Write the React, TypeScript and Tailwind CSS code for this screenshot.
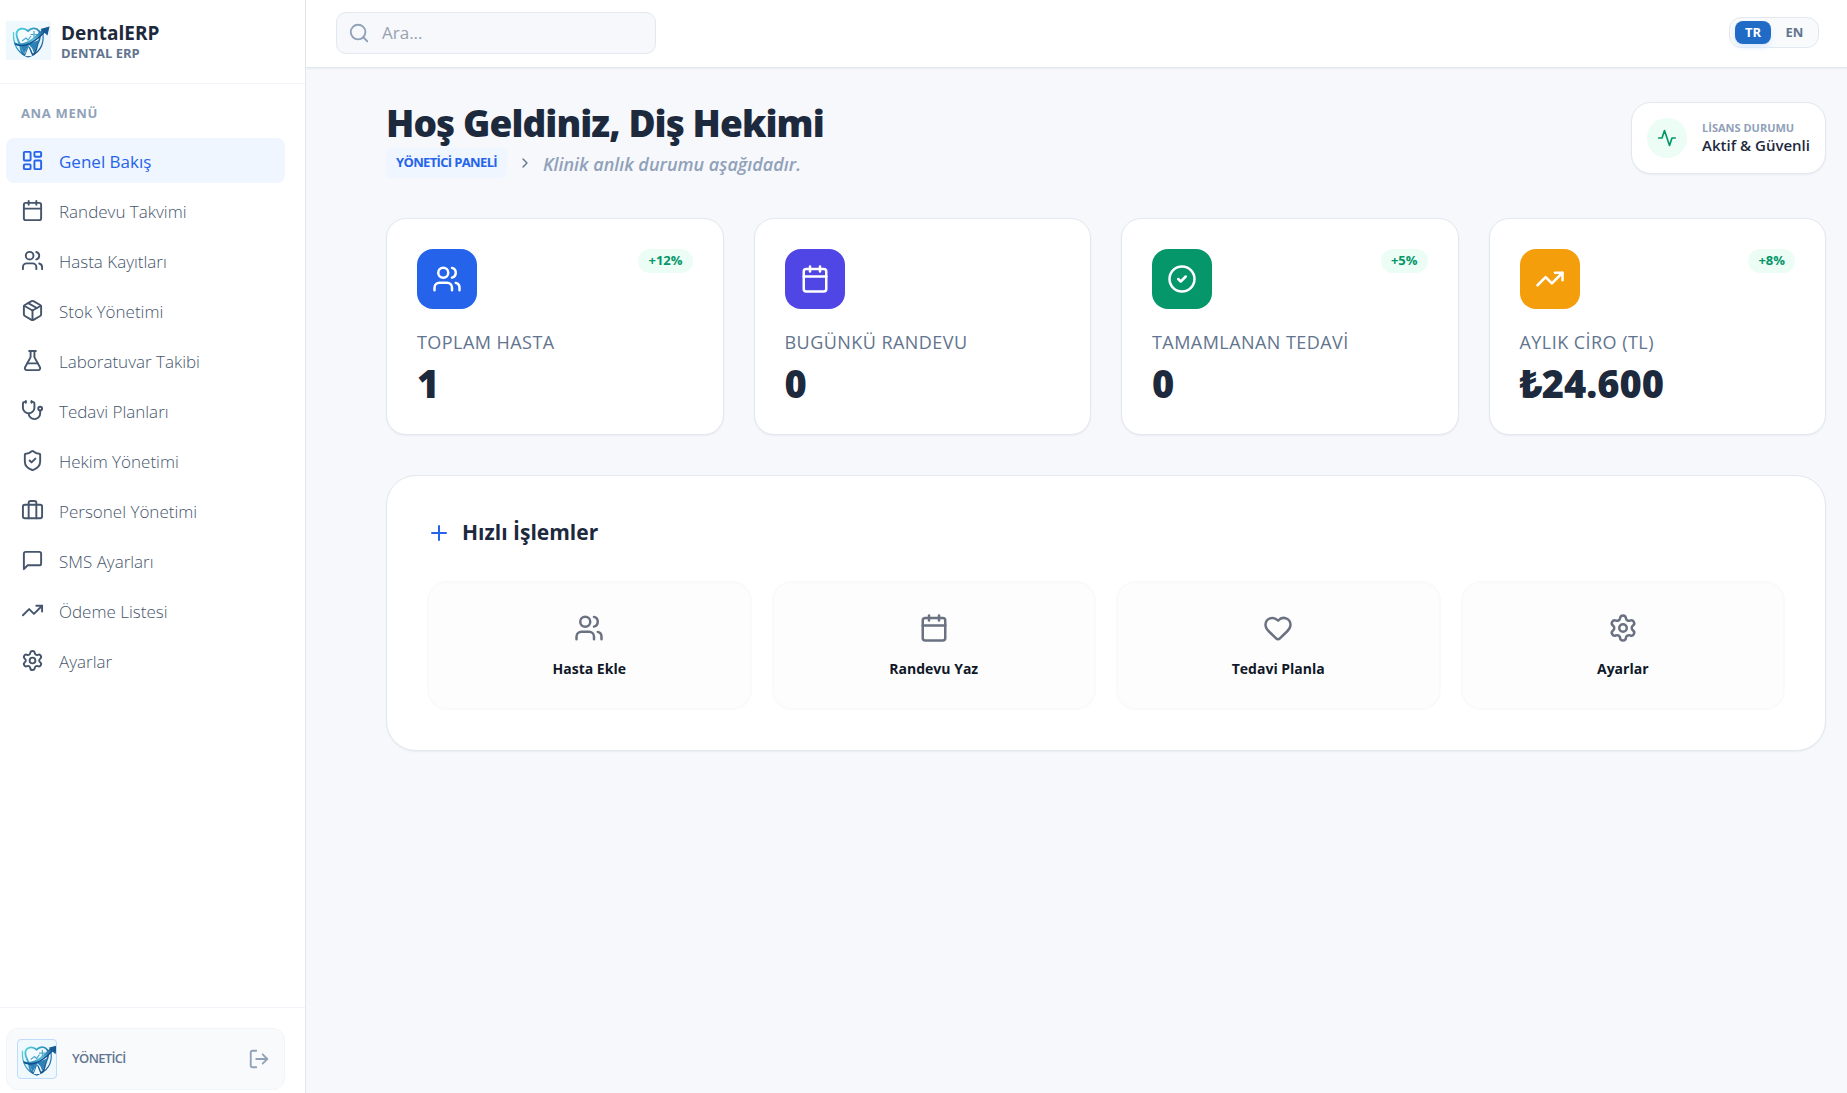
import { useState } from 'react'
import {
  Briefcase,
  Calendar,
  ChevronRight,
  CircleCheck,
  FlaskConical,
  Heart,
  LayoutDashboard,
  LogOut,
  Package,
  Plus,
  Search,
  Settings,
  ShieldCheck,
  Stethoscope,
  TrendingUp,
  Users,
} from 'lucide-react'

function MessageIcon({ className }: { className?: string }) {
  return (
    <svg viewBox="0 0 24 24" fill="none" stroke="currentColor" strokeWidth="2" strokeLinecap="round" strokeLinejoin="round" className={className}>
      <path d="M21 15a2 2 0 0 1-2 2H7l-4 4V5a2 2 0 0 1 2-2h14a2 2 0 0 1 2 2z" />
    </svg>
  )
}

function PulseIcon({ className }: { className?: string }) {
  return (
    <svg viewBox="0 0 24 24" fill="none" stroke="currentColor" strokeWidth="2" strokeLinecap="round" strokeLinejoin="round" className={className}>
      <path d="M22 12h-4l-3 9L9 3l-3 9H2" />
    </svg>
  )
}

const menu = [
  { label: 'Genel Bakış', icon: LayoutDashboard },
  { label: 'Randevu Takvimi', icon: Calendar },
  { label: 'Hasta Kayıtları', icon: Users },
  { label: 'Stok Yönetimi', icon: Package },
  { label: 'Laboratuvar Takibi', icon: FlaskConical },
  { label: 'Tedavi Planları', icon: Stethoscope },
  { label: 'Hekim Yönetimi', icon: ShieldCheck },
  { label: 'Personel Yönetimi', icon: Briefcase },
  { label: 'SMS Ayarları', icon: MessageIcon },
  { label: 'Ödeme Listesi', icon: TrendingUp },
  { label: 'Ayarlar', icon: Settings },
]

const stats = [
  { label: 'TOPLAM HASTA', value: '1', change: '+12%', icon: Users, color: 'bg-[#2563eb]' },
  { label: 'BUGÜNKÜ RANDEVU', value: '0', change: '', icon: Calendar, color: 'bg-[#4f46e5]' },
  { label: 'TAMAMLANAN TEDAVİ', value: '0', change: '+5%', icon: CircleCheck, color: 'bg-[#059669]' },
  { label: 'AYLIK CİRO (TL)', value: '₺24.600', change: '+8%', icon: TrendingUp, color: 'bg-[#f59e0b]' },
]

const actions = [
  { label: 'Hasta Ekle', icon: Users },
  { label: 'Randevu Yaz', icon: Calendar },
  { label: 'Tedavi Planla', icon: Heart },
  { label: 'Ayarlar', icon: Settings },
]

function Logo({ className }: { className?: string }) {
  return (
    <svg viewBox="0 0 45 39" preserveAspectRatio="xMidYMid slice" className={className} role="img" aria-label="DentalERP">
      <defs>
        <linearGradient id="tooth" x1="0" y1="0" x2="1" y2="1">
          <stop offset="0" stopColor="#4fd8e0" />
          <stop offset="0.5" stopColor="#2a86b8" />
          <stop offset="1" stopColor="#0f3d7a" />
        </linearGradient>
        <linearGradient id="swoosh" x1="0" y1="1" x2="1" y2="0">
          <stop offset="0" stopColor="#1a6fae" />
          <stop offset="0.5" stopColor="#5cc0dc" />
          <stop offset="1" stopColor="#0f4f8c" />
        </linearGradient>
      </defs>
      {/* shield */}
      <path d="M7.500 11C7 20 9 31 22 36C34 32 38 23 37 13" fill="#e3f4fb" stroke="url(#tooth)" strokeWidth="1.2" />
      {/* tooth */}
      <path
        d="M22 10C18 6 11 7 10.500 13C10.500 18 13 20 14 24C15 29 16 34 19 33.500C21 33 20.500 27 22.500 26C25 27 24.500 33 27 33.500C30 33 30 27 32 22C34 18 35 14 33 10C30 6 25 7 22 10Z"
        fill="#f4fbfe"
        stroke="url(#tooth)"
        strokeWidth="1.800"
      />
      <path d="M14 23L18 33L21 27L23 24L26 27L28 32L33 19L25 22Z" fill="#2c82b8" />
      <path d="M19 35L22.500 26L26 35Z" fill="#eef9fd" />
      <path d="M16 20L20 17L22 19L25 15M28 10V17M24.500 13.500H31.500" stroke="#4aa9d0" strokeWidth="1.200" fill="none" />
      {/* arrow */}
      <path d="M8 21C8 27 22 27 39 10L36.500 8C27 18 17 26 8 21Z" fill="url(#swoosh)" />
      <path d="M9 23C18 28 29 21 40 9.500" stroke="#0f4f8c" strokeWidth="1.400" fill="none" />
      <path d="M34.500 8L43.500 5.500L41.500 14.500Z" fill="#155a92" />
    </svg>
  )
}

function Sidebar() {
  return (
    <aside className="flex w-[306px] shrink-0 flex-col border-r border-slate-200 bg-white">
      <div className="flex h-[84px] items-center gap-[10px] border-b border-slate-100 pb-[3px] pl-[6px]">
        <div className="flex h-[39px] w-[45px] bg-[#eff8fd]">
          <Logo className="h-full w-full" />
        </div>
        <div className="pt-[3px]">
          <div className="text-[19px] font-bold leading-[22px] text-slate-800">DentalERP</div>
          <div className="text-[13px] font-bold leading-[18px] text-slate-500">DENTAL ERP</div>
        </div>
      </div>

      <nav className="flex-1 pl-[6px] pr-5 pt-[18px]">
        <h2 className="mb-[14px] pl-[15px] text-[13px] font-bold leading-[22px] tracking-wider text-slate-400">ANA MENÜ</h2>
        <ul className="flex flex-col gap-[5px]">
          {menu.map((item, i) => (
            <li key={item.label}>
              <a
                href="#"
                aria-current={i === 0 ? 'page' : undefined}
                className={
                  i === 0
                    ? 'flex h-[45px] items-center gap-[15px] rounded-lg bg-[#eff6ff] pl-[15px] text-[17px] font-medium text-[#2563eb]'
                    : 'flex h-[45px] items-center gap-[15px] rounded-lg pl-[15px] text-[17px] font-[350] text-slate-600 hover:bg-slate-50'
                }
              >
                <item.icon className="h-[23px] w-[23px]" />
                <span className="pt-[2px]">{item.label}</span>
              </a>
            </li>
          ))}
        </ul>
      </nav>

      <div className="border-t border-slate-100 pb-[3px] pl-[6px] pr-5 pt-5">
        <div className="flex h-[62px] items-center rounded-xl border border-slate-100 bg-slate-50 pl-[10px] pr-[14px]">
          <div className="flex h-10 w-10 items-center overflow-hidden rounded border border-[#bfdbfe] bg-[#eff8fd]">
            <Logo className="h-full w-full" />
          </div>
          <span className="ml-[15px] flex-1 text-[13px] font-semibold tracking-tighter text-slate-500">YÖNETİCİ</span>
          <button type="button" aria-label="Çıkış" className="text-slate-400">
            <LogOut className="h-[22px] w-[22px]" />
          </button>
        </div>
      </div>
    </aside>
  )
}

function Header() {
  const [lang, setLang] = useState('TR')

  return (
    <header className="flex h-[68px] shrink-0 items-center justify-between border-b border-slate-200 bg-white pl-[30px] pr-7 shadow-[0_1px_2px_rgba(0,0,0,0.05)]">
      <label className="mb-[2px] flex h-[42px] w-80 items-center gap-3 rounded-[10px] border border-slate-200 bg-[#f6f8fc] px-[11px]">
        <Search className="h-[22px] w-[22px] shrink-0 text-slate-400" />
        <input type="text" placeholder="Ara..." aria-label="Ara" className="w-full bg-transparent text-[17px] text-slate-700 outline-none placeholder:text-gray-400" />
      </label>
      <div className="mb-[2px] flex h-[31px] items-center rounded-xl border border-slate-200 bg-slate-50 px-[5px]">
        {['TR', 'EN'].map((l) => (
          <button
            key={l}
            type="button"
            onClick={() => setLang(l)}
            className={
              lang === l
                ? 'h-[23px] w-9 rounded-lg bg-[#1f6bc6] text-[13px] font-bold text-white shadow-md shadow-blue-100'
                : 'ml-[5px] h-[23px] w-[37px] rounded-lg text-[13px] font-bold text-slate-500'
            }
          >
            {l}
          </button>
        ))}
      </div>
    </header>
  )
}

function Welcome() {
  return (
    <div className="flex items-start justify-between">
      <div>
        <h1 className="mb-1 text-[37px] font-black leading-[42px] tracking-tight text-slate-800">Hoş Geldiniz, Diş Hekimi</h1>
        <div className="flex items-center">
          <span className="flex h-[30px] items-center rounded-md bg-[#eff6ff] px-[10px] text-[13px] font-bold tracking-tighter text-[#2563eb]">YÖNETİCİ PANELİ</span>
          <ChevronRight className="ml-[10px] h-4 w-4 text-slate-500" />
          <span className="ml-[10px] pt-[2px] text-[18px] font-semibold italic leading-7 text-slate-400">Klinik anlık durumu aşağıdadır.</span>
        </div>
      </div>
      <div className="flex h-[72px] items-center gap-[15px] rounded-[20px] border border-slate-200 bg-white px-[15px] shadow-[0_1px_2px_rgba(0,0,0,0.05)]">
        <div className="flex h-10 w-10 items-center justify-center rounded-full bg-[#ecfdf5] text-[#059669]">
          <PulseIcon className="h-5 w-5" />
        </div>
        <div>
          <div className="text-[11px] font-bold leading-[14px] text-slate-400">LİSANS DURUMU</div>
          <div className="text-[15px] font-semibold leading-5 text-slate-800">Aktif &amp; Güvenli</div>
        </div>
      </div>
    </div>
  )
}

export default function App() {
  return (
    <div className="flex min-h-screen bg-[#f6f8fc] font-['Open_Sans','Noto_Sans',sans-serif] antialiased">
      <Sidebar />
      <div className="flex min-w-0 flex-1 flex-col">
        <Header />
        <main className="flex-1 pb-10 pl-20 pr-[21px] pt-[34px]">
          <Welcome />

          <section className="mt-[40px] grid grid-cols-4 gap-[30px]">
            {stats.map((s) => (
              <div key={s.label} className="h-[217px] rounded-[20px] border border-slate-200 bg-white p-[30px] shadow-[0_1px_2px_rgba(0,0,0,0.05)]">
                <div className="flex items-start justify-between">
                  <div className={`flex h-[60px] w-[60px] items-center justify-center rounded-2xl text-white ${s.color}`}>
                    <s.icon className="h-[30px] w-[30px]" />
                  </div>
                  {s.change && (
                    <span className="flex h-6 items-center rounded-full bg-[#ecfdf5] px-[10px] text-[13px] font-bold text-[#059669]">{s.change}</span>
                  )}
                </div>
                <div className="mt-[19px] text-[18px] font-medium leading-7 tracking-wide text-slate-500">{s.label}</div>
                <div className="mt-[5px] text-[38px] font-black leading-[44px] text-slate-800">{s.value}</div>
              </div>
            ))}
          </section>

          <section className="mt-10 rounded-[30px] border border-slate-200 bg-white p-10 shadow-[0_1px_2px_rgba(0,0,0,0.05)]">
            <h2 className="flex h-[34px] items-center gap-[11px] text-[21px] font-bold text-slate-800">
              <Plus className="h-6 w-6 text-[#2563eb]" />
              Hızlı İşlemler
            </h2>
            <div className="mt-[31px] grid grid-cols-4 gap-5">
              {actions.map((a) => (
                <button
                  key={a.label}
                  type="button"
                  className="flex h-[129px] flex-col items-center justify-center gap-[14px] rounded-[20px] border-2 border-gray-50 bg-[#fdfdfd] pt-[3px] text-[14px] font-bold leading-6 text-gray-900"
                >
                  <a.icon className="h-[30px] w-[30px] text-gray-500" />
                  {a.label}
                </button>
              ))}
            </div>
          </section>
        </main>
      </div>
    </div>
  )
}
